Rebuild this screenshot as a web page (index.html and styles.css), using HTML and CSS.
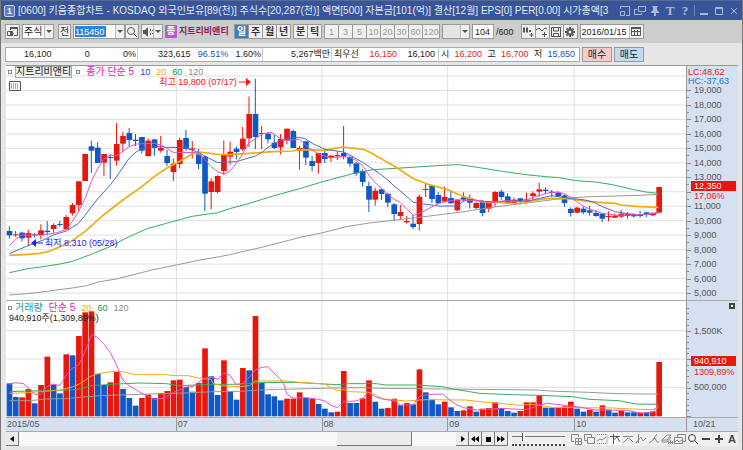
FILE: index.html
```
<!DOCTYPE html>
<html lang="ko">
<head>
    <meta charset="UTF-8">
    <meta name="viewport" content="width=device-width, initial-scale=1.0">
    <title>키움종합차트</title>
    <link rel="stylesheet" href="styles.css">
</head>
<body>
    <div class="window">
        <header class="titlebar">
            <span class="badge">1</span>
            <h1>[0600] 키움종합차트 - KOSDAQ 외국인보유[89(천)] 주식수[20,287(천)] 액면[500] 자본금[101(억)] 결산[12월] EPS[0] PER[0.00] 시가총액[3</h1>
            <div class="title-icons">
                <button aria-label="크기"><svg viewBox="0 0 12 12"><path d="M1.5 4V1.5h9v9H7M1.5 6.5h4v4h-4z"/></svg></button>
                <button aria-label="복사"><svg viewBox="0 0 12 12"><path d="M4.500 1.500h7v5h-7zM3 4.500H.5v5h7V8"/></svg></button>
                <button aria-label="고정"><svg viewBox="0 0 12 12"><path class="fill" d="M3 1h6v1H8v3l2 2v1H2V7l2-2V2H3zM5 8h2v3H5z"/></svg></button>
                <button class="letter">T</button>
                <button class="letter">?</button>
                <span class="bar"></span>
                <button aria-label="최소화"><svg viewBox="0 0 12 12"><path class="thick" d="M2 9h8"/></svg></button>
                <button aria-label="최대화"><svg viewBox="0 0 12 12"><path d="M2.500 2.500h7v7h-7zM2 3.500h8"/></svg></button>
                <button aria-label="닫기"><svg viewBox="0 0 12 12"><path d="M3 3l6 6M9 3L3 9"/></svg></button>
            </div>
        </header>

        <div class="toolbar">
            <button class="tool" aria-label="창"><svg viewBox="0 0 12 12"><path d="M3.500 4V1.500h7v8H7M.5 5.500h5v4h-5z"/><path class="fill" d="M3 1h8v2H3zM3 5l4 2.500L3 10z"/></svg></button>
            <div class="combo">
                <select class="market" aria-label="시장"><option>주식</option></select>
                <span class="arrow"></span>
            </div>
            <button class="tool prev">전</button>
            <div class="combo">
                <div class="code"><input type="text" aria-label="종목코드" value="115450"></div>
                <button class="arrow" aria-label="목록"></button>
            </div>
            <button class="tool search" aria-label="검색"><svg viewBox="0 0 12 12"><circle cx="5" cy="5" r="3.500"/><path d="M7.500 7.500L11 11"/></svg></button>
            <div class="combo sound">
                <button class="tool" aria-label="소리"><svg viewBox="0 0 12 12"><path class="fill" d="M1 4h2l3-3v10L3 8H1z"/><path d="M8.500 3v2M8.500 7v2M10.500 4v1M10.500 7v1"/></svg></button>
                <span class="arrow"></span>
            </div>
            <div class="stock"><b>종</b><span>지트리비앤티</span></div>
            <div class="group days">
                <button class="tool on">일</button>
                <button class="tool">주</button>
                <button class="tool">월</button>
                <button class="tool">년</button>
            </div>
            <div class="group days">
                <button class="tool">분</button>
                <button class="tool">틱</button>
            </div>
            <div class="group">
                <button class="tool" disabled>1</button>
                <button class="tool" disabled>3</button>
                <button class="tool" disabled>5</button>
                <button class="tool" disabled>10</button>
                <button class="tool" disabled>20</button>
                <button class="tool" disabled>30</button>
                <button class="tool" disabled>60</button>
                <button class="tool wide" disabled>120</button>
            </div>
            <div class="combo off">
                <select aria-label="분 간격" disabled><option></option></select>
                <span class="arrow"></span>
            </div>
            <label class="count"><input type="text" value="104" aria-label="봉 개수">/600</label>
            <div class="group">
                <button class="tool" aria-label="봉 추가"><svg viewBox="0 0 12 12"><path class="fill" d="M1 2h2v4H1zM4 2h2v4H4zM7 4h2v2H7z"/><path d="M2 1v6M5 1v6M9.500 7v4M7.500 9h4"/></svg></button>
                <button class="tool" aria-label="지표 추가"><svg viewBox="0 0 12 12"><path d="M0 4l3-2 3 3 3-3 2 1M8.500 6v5M6 8.500h5"/></svg></button>
                <button class="tool" aria-label="저장"><svg viewBox="0 0 12 12"><path d="M1.500 1.500h9v9h-9zM3.500 1v4h5V1M3.500 11V7.500h5V11"/></svg></button>
                <button class="tool" aria-label="설정"><svg viewBox="0 0 12 12"><circle class="thick" cx="6" cy="6" r="2.500"/><path class="thick" d="M6 1v2M6 9v2M1 6h2M9 6h2M2.500 2.500l1 1M8.500 8.500l1 1M9.500 2.500l-1 1M3.500 8.500l-1 1"/></svg></button>
            </div>
            <div class="date">
                <input type="text" value="2016/01/15" aria-label="날짜">
                <button aria-label="달력"><svg viewBox="0 0 12 12"><path d="M1.500 2.500h9v7h-9zM1 5.500h10M4.500 4v6M7.500 4v6"/><path class="fill" d="M1 1h10v2H1z"/></svg></button>
            </div>
        </div>

        <div class="quote">
            <div class="values">
                <div class="cell prices"><span>16,100</span><span>0</span><span>0%</span></div>
                <div class="cell volume-cell"><span>323,615</span><span class="blue">96.51%</span><span>1.60%</span></div>
                <div class="cell amount"><span>5,267백만</span></div>
                <div class="cell best"><span>최우선</span><span class="red">16,150</span><span>16,100</span></div>
                <div class="cell range"><span>시</span><span class="red">16,200</span><span>고</span><span class="red">16,700</span><span>저</span><span class="blue">15,850</span></div>
            </div>
            <button class="buy">매수</button>
            <button class="sell">매도</button>
        </div>

        <main class="chart">
            <section class="pane price-pane">
                <svg class="plot" id="price" viewBox="18 18 2043 702" preserveAspectRatio="none"></svg>
                <div class="legend">
                    <i></i><span class="name">지트리비앤티</span><i></i>
                    <span class="ma5">종가 단순 5</span><span class="ma10">10</span><span class="ma20">20</span><span class="ma60">60</span><span class="ma120">120</span>
                </div>
                <button class="grid-button" aria-label="표"><svg viewBox="0 0 12 12"><path d="M.5 1.500h11v9H.5z"/><path class="dots" d="M2 4h8M2 6h8M2 8h8"/></svg></button>
                <div class="note high">최고 19,800 (07/17)<svg viewBox="0 0 12 8"><path d="M0 4h8"/><path class="fill" d="M7 0l5 4-5 4z"/></svg></div>
                <div class="note low"><svg viewBox="0 0 12 8"><path d="M12 4H4"/><path class="fill" d="M5 0L0 4l5 4z"/></svg>최저 8,310 (05/28)</div>
            </section>
            <svg class="axis" id="price-axis" width="51" height="234"></svg>

            <section class="pane volume-pane">
                <svg class="plot" id="volume" viewBox="18 18 2043 348" preserveAspectRatio="none"></svg>
                <div class="legend">
                    <i></i><span class="teal">거래량</span>
                    <span class="ma5">단순 5</span><span class="ma20">20</span><span class="ma60">60</span><span class="ma120">120</span>
                </div>
                <div class="total">940,910주(1,309,89%)</div>
            </section>
            <svg class="axis" id="volume-axis" width="51" height="116"></svg>

            <div class="dates"><span>2015/05</span><span>07</span><span>08</span><span>09</span><span>10</span></div>
            <div class="last-date">10/21</div>
        </main>

        <footer class="bottom">
            <button class="raised" aria-label="왼쪽"><svg viewBox="0 0 12 12"><path class="fill" d="M8 3v6L4 6z"/></svg></button>
            <div class="track"><div class="thumb"></div></div>
            <button class="raised" aria-label="오른쪽"><svg viewBox="0 0 12 12"><path class="fill" d="M5 3v6l4-3z"/></svg></button>
            <button class="raised" aria-label="뒤로"><svg viewBox="0 0 12 12"><path class="fill" d="M6 3v6L2 6zM10 3v6L6 6z"/></svg></button>
            <button class="raised" aria-label="정지"><svg viewBox="0 0 12 12"><path class="fill" d="M4 4h5v5H4z"/></svg></button>
            <button class="raised" aria-label="앞으로"><svg viewBox="0 0 12 12"><path class="fill" d="M2 3v6l4-3zM6 3v6l4-3z"/></svg></button>
            <div class="speed"><input type="range" min="0" max="10" value="2" aria-label="속도"></div>
            <div class="draw-tools">
                <button aria-label="창 추가"><svg viewBox="0 0 12 12"><path d="M8.500 4V1.500h-7v7H4M5.500 5.500h6v6h-6zM8.500 6v5M6 8.500h5"/></svg></button>
                <button aria-label="창 겹침"><svg viewBox="0 0 12 12"><path d="M4 7.500H1.500v-6h7V4M4.500 4.500h7v6h-7z"/></svg></button>
                <button aria-label="채널"><svg viewBox="0 0 12 12"><path class="dots" d="M1 1.500h10v9H1"/><path d="M1 8l3-2 2 1 4-3"/></svg></button>
                <button class="pressed" aria-label="수직선"><svg viewBox="0 0 12 12"><path d="M1 3.500h10M4.500 1v10M4.500 7L8 4l3 5"/></svg></button>
                <button aria-label="저항선"><svg viewBox="0 0 12 12"><path d="M1 3.500h10M1 10l5-5 3 2 2 2"/></svg></button>
                <button aria-label="추세선"><svg viewBox="0 0 12 12"><path d="M3.500 1v9M1 10l5-6 2 4 3-3"/></svg></button>
                <button aria-label="가격선"><svg viewBox="0 0 12 12"><path d="M1 10l3-2 5-7M5 6l2-1 2 4h2"/></svg></button>
                <button aria-label="지우개"><svg viewBox="0 0 12 12"><path d="M1 7l5-5h4L6 7H1v2h5l4-5M7.500 8v3M9.500 7v4M11.500 8v3M7 9.500h5"/></svg></button>
                <button aria-label="그림"><svg viewBox="0 0 12 12"><path d="M3.500 4V1.500h8v7H9M.5 4.500h8v6h-8zM1 9l2-2 2 2 3-2"/></svg></button>
                <button class="dark" aria-label="확대경"><svg viewBox="0 0 12 12"><circle cx="5" cy="5" r="3.500"/><path d="M7.500 7.500L11 11"/></svg></button>
                <button class="dark" aria-label="축소"><svg viewBox="0 0 12 12"><path class="thick" d="M2 6h8"/></svg></button>
                <button class="dark" aria-label="확대"><svg viewBox="0 0 12 12"><path class="thick" d="M2 6h8M6 2v8"/></svg></button>
                <button class="dark letter">A</button>
            </div>
        </footer>
    </div>
    <script src="chart.js"></script>
</body>
</html>
```

FILE: styles.css
```
* {
    box-sizing: border-box;
}

body {
    margin: 0;
    background-color: #e6e6e6;
    color: #222;
    font-family: "Liberation Sans", "Noto Sans CJK KR", sans-serif;
    font-size: 9px;
    line-height: 12px;
}

button, input, select {
    margin: 0;
    padding: 0;
    border: none;
    border-radius: 0;
    background: none;
    color: inherit;
    font: inherit;
}

button {
    display: flex;
    align-items: center;
    justify-content: center;
}

svg {
    display: block;
    fill: none;
    stroke: currentColor;
}

button svg {
    flex: none;
    width: 12px;
    height: 12px;
}

.fill {
    fill: currentColor;
    stroke: none;
}

.thick {
    stroke-width: 2;
}

.dots {
    stroke-dasharray: 1 1;
}

.window {
    display: flex;
    flex-direction: column;
    min-height: 100vh;
    border: 1px solid #777;
    border-top-color: #5a6a90;
    border-bottom-width: 2px;
}

/* title bar */
.titlebar {
    display: flex;
    align-items: center;
    height: 19px;
    padding: 0 2px 0 3px;
    background-color: #38549a;
    color: #e4eaf6;
}

.badge {
    width: 11px;
    height: 12px;
    border: 1px solid #c4d0ea;
    border-radius: 2px;
    background-color: #5f7dbd;
    font-weight: bold;
    line-height: 10px;
    text-align: center;
}

.titlebar h1 {
    flex: 1;
    min-width: 0;
    margin: 0 0 0 3px;
    overflow: hidden;
    font-size: 10px;
    font-weight: normal;
    white-space: nowrap;
}

.title-icons {
    display: flex;
    align-items: center;
    gap: 3px;
    color: #a9b7da;
}

.letter {
    width: 12px;
    font-family: "Liberation Serif", serif;
    font-size: 13px;
    font-weight: bold;
}

.bar {
    width: 1px;
    height: 11px;
    background-color: #6f86bb;
}

/* toolbar */
.toolbar {
    display: flex;
    align-items: center;
    height: 23px;
    gap: 2px;
    padding: 0 4px;
    background-color: #cdcdcd;
}

.tool {
    width: 15px;
    height: 15px;
    border: 1px solid #999;
    background-color: #f0f0f0;
    color: #333;
}

.tool svg {
    color: #555;
}

.combo {
    display: flex;
    height: 15px;
    border: 1px solid #999;
    background-color: #fff;
}

.combo select {
    width: 21px;
    padding-left: 1px;
    appearance: none;
}

.market, .prev, .days {
    font-size: 10px;
}

.arrow {
    display: flex;
    align-items: center;
    justify-content: center;
    width: 9px;
    border-left: 1px solid #bbb;
    background-color: #f0f0f0;
}

.arrow::after {
    content: "";
    border: 3px solid transparent;
    border-top-color: #555;
    border-bottom: none;
}

.prev {
    width: 13px;
    margin-left: 2px;
}

.code {
    width: 41px;
    padding: 1px 0 1px 1px;
}

.code input {
    display: block;
    width: 31px;
    height: 11px;
    background-color: #2f86d8;
    color: #fff;
}

.search {
    width: 14px;
    margin-left: -2px;
}

.sound .tool {
    width: 11px;
    height: 13px;
    border: none;
}

.stock {
    display: flex;
    width: 67px;
    height: 13px;
    overflow: hidden;
    color: #8a1f55;
    font-weight: bold;
    white-space: nowrap;
}

.stock b {
    width: 12px;
    margin-right: 2px;
    background-color: #b45ed0;
    color: #fff;
    text-align: center;
}

.group {
    display: flex;
    margin-right: 1px;
}

.group .tool {
    margin-right: -1px;
}

.days .tool {
    font-weight: bold;
}

.group .on {
    background-color: #3f7cc4;
    color: #fff;
}

.group .tool:disabled {
    color: #999;
}

.group .wide {
    width: 18px;
}

.off {
    background-color: #e4e4e4;
}

.off select {
    width: 17px;
}

.count {
    display: flex;
    align-items: center;
    gap: 2px;
    margin-right: 5px;
}

.count input {
    width: 22px;
    height: 15px;
    padding-right: 3px;
    border: 1px solid #999;
    background-color: #fff;
    text-align: right;
}

.date {
    display: flex;
    height: 15px;
    border: 1px solid #999;
    background-color: #fff;
}

.date input {
    width: 48px;
    padding-left: 1px;
}

.date button {
    width: 14px;
    border-left: 1px solid #bbb;
    background-color: #f0f0f0;
    color: #555;
}

/* quote line */
.quote {
    display: flex;
    align-items: center;
    height: 22px;
    gap: 2px;
    padding: 1px 4px 0;
}

.values {
    display: flex;
    height: 15px;
    border: 1px solid #aaa;
    background-color: #fff;
    line-height: 13px;
    white-space: nowrap;
}

.cell {
    display: flex;
    justify-content: space-between;
    border-right: 1px solid #ccc;
}

.cell:last-child {
    border-right: none;
}

.prices {
    width: 132px;
    padding: 0 1px 0 18px;
}

.volume-cell {
    width: 125px;
    padding: 0 1px 0 20px;
}

.amount {
    width: 69px;
    padding-right: 1px;
    justify-content: flex-end;
}

.best {
    width: 107px;
    padding: 0 3px 0 2px;
}

.range {
    width: 140px;
    padding: 0 4px 0 2px;
}

.red {
    color: #e8201a;
}

.blue {
    color: #2250c8;
}

.buy, .sell {
    width: 30px;
    height: 15px;
    border: 1px solid #999;
    background-color: #f6cccc;
    font-size: 10px;
}

.sell {
    background-color: #c3daf3;
}

/* chart */
.chart {
    display: grid;
    grid-template-columns: 1fr 51px;
    grid-template-rows: 235px 117px 14px;
    margin: 0 4px 0 5px;
    border-top: 1px solid #999;
    background-color: #fff;
}

.pane {
    position: relative;
    min-width: 0;
    border-bottom: 1px solid #aaa;
    border-right: 1px solid #999;
    overflow: hidden;
}

.plot {
    width: 100%;
    height: 100%;
}

.axis {
    width: 51px;
    height: 100%;
    border-bottom: 1px solid #aaa;
    background-color: #d5e1f0;
}

.axis text {
    fill: #555;
    stroke: none;
}

.axis .red {
    fill: #e8201a;
}

.axis .hc {
    fill: #2a6fd0;
}

.axis .tag {
    fill: #e8170c;
    stroke: none;
}

.axis .tag-text {
    fill: #fff;
}

.axis line {
    stroke: #888;
}

.grid-line {
    stroke: #e0e0e0;
    stroke-width: 3;
}

.up {
    fill: #e8170c;
    stroke: #e8170c;
}

.down {
    fill: #0f58c8;
    stroke: #0f58c8;
}

.wick {
    stroke-width: 3;
}

.body {
    stroke: none;
}

.line {
    stroke-width: 3;
}

.line.ma5 { stroke: #e850cc; }
.line.ma10 { stroke: #4f68c8; }
.line.ma20 { stroke: #f0ac10; }
.line.ma60 { stroke: #38ac5c; }
.line.ma120 { stroke: #999; }

#price .line.ma20 {
    stroke-width: 5;
}

.legend {
    position: absolute;
    top: 0;
    left: 2px;
    display: flex;
    align-items: center;
    gap: 6px;
    height: 12px;
    white-space: nowrap;
}

.volume-pane .legend {
    top: 1px;
}

.legend i {
    width: 4px;
    height: 4px;
    border: 1px solid #888;
}

.legend i:first-child {
    margin-right: -3px;
}

.legend .name {
    border: 1px solid #aaa;
    background-color: #f0f0f0;
    line-height: 10px;
}

.legend .name, .legend .ma5, .legend .teal {
    font-size: 10px;
}

.legend .name + i {
    margin-left: -2px;
}

.legend .ma5 { color: #e020c0; }
.legend .ma10 { color: #2040c0; }
.legend .ma20 { color: #f0ac10; }
.legend .ma60 { color: #109838; }
.legend .ma120 { color: #888; }
.legend .teal { color: #2a98a0; }

.grid-button {
    position: absolute;
    top: 14px;
    left: 3px;
    color: #555;
}

.note {
    position: absolute;
    display: flex;
    align-items: center;
    gap: 2px;
    white-space: nowrap;
}

.note svg {
    width: 12px;
    height: 8px;
}

.high {
    top: 10px;
    right: 64%;
    color: #ff1010;
}

.low {
    top: 171px;
    left: 25px;
    color: #2020ff;
}

.total {
    position: absolute;
    top: 11px;
    left: 3px;
}

.dates, .last-date {
    border-bottom: 1px solid #aaa;
    background-color: #d5e1f0;
    color: #555;
    line-height: 13px;
}

.dates {
    display: grid;
    grid-template-columns: 170fr 146fr 126fr 127fr 112fr;
    border-right: 1px solid #999;
}

.dates span {
    padding-left: 1px;
}

.dates span + span {
    border-left: 1px solid #999;
}

.last-date {
    padding-left: 6px;
}

/* scroll bar and drawing tools */
.bottom {
    display: flex;
    height: 14px;
    margin: 0 4px 4px 5px;
    background-color: #f0f0f0;
}

.raised {
    width: 13px;
    height: 14px;
    border-right: 1px solid #777;
    border-bottom: 1px solid #777;
    background-color: #ececec;
    color: #000;
}

.track {
    flex: 1;
    display: flex;
    padding-right: 44px;
    justify-content: flex-end;
    background-color: #f8f8f8;
}

.thumb {
    width: 75px;
    border-right: 1px solid #777;
    border-bottom: 1px solid #777;
    background-color: #ececec;
}

.speed {
    width: 53px;
    margin: 0 5px 0 4px;
    border-bottom: 2px dotted #444;
}

.speed input {
    display: block;
    width: 100%;
    height: 10px;
    appearance: none;
    background: linear-gradient(#777, #777) 0 4px / 100% 1px no-repeat;
}

.speed input::-webkit-slider-thumb {
    appearance: none;
    width: 3px;
    height: 8px;
    border-left: 1px solid #555;
    background-color: #f0f0f0;
}

.draw-tools {
    display: flex;
    align-items: center;
    gap: 1px;
    color: #888;
}

.draw-tools .pressed {
    background-color: #fff;
    color: #555;
}

.draw-tools .dark {
    color: #444;
}

.draw-tools .letter {
    font-family: "Liberation Sans", sans-serif;
    font-size: 11px;
}
```

FILE: chart.js
```
// chart units: 3 per pixel
const START = 28;
const STEP = 18.95;

// [colour, high, body top, body bottom, low]
const candles = [
    ["d",499,513,526,536],["u",513,523,526,531],["d",515,518,535,544],["u",509,519,533,558],["d",519,523,526,533],
    ["u",493,511,525,538],["d",483,512,516,526],["u",490,495,507,518],["d",483,492,495,500],["u",465,471,508,510],
    ["u",429,435,460,467],["u",364,364,435,454],["u",282,282,363,363],["d",242,259,272,339],["d",247,263,309,309],
    ["u",282,282,308,348],["d",282,291,294,357],["u",189,252,302,317],["u",216,228,251,275],["d",204,219,240,258],
    ["d",222,239,243,258],["d",231,231,272,280],["u",235,242,288,290],["d",238,238,264,287],["u",228,263,272,278],
    ["d",270,288,309,318],["u",296,311,336,363],["u",234,240,312,325],["d",210,234,267,272],["u",243,265,269,296],
    ["d",267,283,312,328],["d",287,290,401,453],["u",355,364,396,448],["u",346,348,396,400],["u",242,283,333,344],
    ["u",245,275,290,314],["d",259,266,276,298],["u",201,236,268,274],["u",109,162,235,261],["d",56,162,231,268],
    ["u",197,219,222,267],["d",216,221,238,250],["d",223,248,264,268],["u",222,237,262,283],["u",206,206,242,253],
    ["d",209,213,264,264],["u",258,264,273,329],["d",244,244,293,315],["d",288,303,318,334],["u",279,279,309,341],
    ["d",272,279,297,309],["u",285,287,294,306],["u",274,285,289,300],["d",198,279,289,298],["d",287,291,311,320],
    ["d",306,310,340,347],["d",328,333,366,380],["d",365,378,419,456],["u",383,392,419,437],["d",386,388,402,420],
    ["d",399,401,428,441],["d",429,433,462,483],["u",435,456,468,480],["u",468,483,487,491],["d",465,491,501,507],
    ["u",404,410,492,512],["u",371,387,390,411],["d",375,376,417,429],["d",396,405,430,432],["u",380,411,424,428],
    ["d",391,414,430,431],["u",418,419,451,454],["d",397,412,419,425],["d",404,414,428,446],["u",424,429,444,449],
    ["d",420,425,459,469],["u",423,427,446,457],["u",393,396,429,440],["d",389,395,411,419],["d",400,409,429,432],
    ["u",412,419,429,431],["d",414,415,424,433],["u",398,418,422,431],["u",394,400,408,420],["u",368,388,395,410],
    ["d",382,389,393,403],["d",390,395,399,411],["d",394,398,408,411],["d",404,406,429,441],["d",442,447,459,470],
    ["u",440,443,458,460],["d",439,446,457,462],["d",438,451,458,467],["d",450,459,468,470],["d",459,461,476,486],
    ["u",454,468,471,484],["u",460,467,473,474],["u",450,461,470,474],["u",456,462,468,476],["d",460,462,469,473],
    ["d",453,465,468,473],["d",456,457,464,471],["u",457,459,466,469],["u",381,381,458,458]
];

// colour and top of each volume bar
const volumes = ("d265 d306 u307 u282 d325 u270 u185 d269 d295 u178 d181 u123 u52 u49 d236 d270 u262 u231 d282 d309 " +
    "d332 u309 u299 d309 u294 u288 u256 u254 d276 d290 u264 u160 d244 d300 u196 d289 d314 u219 d226 u63 " +
    "d264 d298 d304 d316 u311 u311 u292 d309 u311 d327 d341 d352 u350 u228 d324 d324 u310 u256 d320 d341 " +
    "u339 u311 d331 u324 d328 u223 d292 d314 d328 u320 d337 d348 u346 u334 d350 u341 u339 u322 d339 d348 " +
    "d353 u348 u322 u322 u301 d338 d338 u338 u334 u320 d341 d350 u344 d350 u331 d344 d353 u347 d352 d352 " +
    "u353 d353 u349 u201").split(" ");

const priceLines = {
    ma120: "28,705 84,701 140,694 217,684 260,677 300,665 350,657 460,629 530,615 600,600 660,590 690,584 790,561 910,530 970,518 1040,500 1110,489 1190,480 1250,473 1330,463 1380,457 1440,448 1488,441 1540,434 1630,423 1700,414 1780,410 1850,408 1920,406 1978,403",
    ma60: "28,638 84,626 130,620 180,612 217,604 274,583 330,560 388,530 445,505 500,490 577,469 654,458 690,446 750,430 820,408 900,386 970,365 1060,341 1120,329 1190,325 1250,321 1330,316 1380,314 1440,323 1510,334 1580,344 1640,350 1680,353 1730,362 1790,366 1840,374 1900,388 1940,396 1978,400",
    ma20: "28,586 84,583 120,580 150,573 180,560 220,540 256,514 311,465 369,420 426,380 463,350 500,325 540,304 577,282 600,276 654,283 690,284 750,280 820,275 880,273 900,269 980,271 1000,266 1030,261 1090,268 1110,276 1140,293 1190,322 1242,356 1290,374 1340,387 1380,404 1412,416 1449,426 1488,427 1563,431 1600,422 1640,416 1697,415 1733,420 1772,425 1810,428 1848,430 1867,435 1910,439 1978,442",
    ma10: "28,581 84,557 130,540 160,525 199,513 217,502 236,490 256,465 293,417 331,375 350,350 388,295 410,275 430,265 484,258 500,262 555,263 596,277 615,288 654,308 690,306 710,305 767,288 787,277 805,262 824,250 845,240 880,233 900,232 918,237 940,251 976,268 1033,276 1051,285 1090,307 1110,321 1140,340 1165,360 1184,378 1202,392 1242,427 1260,430 1318,438 1373,438 1392,424 1412,418 1449,424 1488,426 1525,422 1582,424 1621,415 1658,407 1697,413 1752,419 1780,425 1810,440 1848,455 1885,461 1924,465 1961,461 1978,459",
    ma5: "28,557 47,538 65,525 130,525 170,518 200,508 217,485 236,455 256,415 274,365 293,327 311,298 331,285 350,287 369,275 388,260 410,252 463,250 484,255 520,277 590,278 610,292 634,320 654,335 672,342 690,335 710,310 730,280 748,248 767,237 787,222 810,217 824,222 842,236 862,241 900,238 930,266 957,282 990,293 1033,290 1051,292 1069,300 1090,318 1108,345 1127,368 1165,402 1184,418 1202,427 1222,447 1242,466 1260,460 1318,430 1336,425 1373,420 1449,422 1468,430 1488,426 1525,422 1563,425 1582,420 1600,413 1640,400 1676,396 1697,402 1715,412 1733,425 1752,438 1772,448 1810,460 1850,466 1924,464 1961,461 1978,455"
};

const volumeLines = {
    ma120: "28,317 90,317 140,312 200,311 250,306 300,302 390,299 530,295 640,290 720,289 780,285 840,283 930,281 1000,279 1090,278 1140,280 1330,282 1440,283 1610,285 1670,289 1770,292 1830,295 1920,297 1978,297",
    ma60: "28,290 84,288 140,287 210,285 240,282 274,272 350,267 420,264 500,266 540,272 634,268 690,268 720,267 780,263 880,262 940,265 1010,269 1050,266 1130,266 1160,270 1250,270 1330,275 1360,282 1410,290 1440,295 1540,299 1620,301 1720,305 1770,313 1860,317 1910,327 1978,328",
    ma20: "28,295 84,293 122,290 180,285 217,276 236,268 256,256 274,243 300,235 350,228 380,232 404,239 500,239 520,242 565,242 596,249 634,253 640,265 665,272 720,275 750,272 766,258 862,258 900,262 976,267 994,278 1014,287 1033,284 1050,290 1109,292 1130,300 1150,312 1220,318 1280,314 1400,315 1440,320 1500,325 1563,331 1601,328 1639,334 1660,337 1840,339 1900,342 1961,344 1978,338",
    ma5: "28,268 47,263 70,266 84,277 104,298 122,298 141,275 160,267 180,272 199,240 217,220 236,210 256,170 276,118 293,128 311,146 331,172 350,210 369,255 388,272 426,295 463,313 484,311 502,305 520,293 559,276 580,275 596,262 615,250 634,247 654,253 672,234 690,240 711,270 729,265 748,248 766,225 787,217 805,215 824,235 842,252 852,265 862,298 881,309 920,308 957,313 976,318 994,331 1014,338 1033,320 1069,318 1090,311 1105,292 1127,305 1145,311 1184,318 1203,330 1241,330 1255,310 1265,302 1297,298 1330,297 1355,318 1373,330 1393,338 1431,345 1506,340 1580,344 1600,338 1621,330 1645,325 1733,335 1790,345 1885,346 1924,354 1961,352 1978,330"
};

const months = [530, 967, 1345, 1725];

function gridLines(levels, height) {
    let out = "";
    levels.forEach(y => out += `<path class="grid-line" d="M18 ${y}H2061"/>`);
    months.forEach(x => out += `<path class="grid-line" d="M${x} 0V${height}"/>`);
    return out;
}

function maLines(lines) {
    return Object.keys(lines).map(name => `<polyline class="line ${name}" points="${lines[name]}"/>`).join("");
}

function side(letter) {
    return letter === "u" ? "up" : "down";
}

function drawPrice() {
    const levels = [];
    for (let i = 0; i <= 15; i++) {
        levels.push(48 + i * 43.4);
    }
    let bars = "";
    candles.forEach(([type, high, top, bottom, low], i) => {
        const x = START + i * STEP;
        bars += `<g class="${side(type)}"><path class="wick" d="M${x} ${high}V${low}"/>` +
            `<rect class="body" x="${x - 8}" y="${top}" width="17" height="${bottom - top}"/></g>`;
    });
    document.getElementById("price").innerHTML = gridLines(levels, 720) + bars + maLines(priceLines);
}

function drawVolume() {
    let bars = "";
    volumes.forEach((item, i) => {
        const top = Number(item.slice(1));
        bars += `<g class="${side(item[0])}"><rect class="body" x="${START + i * STEP - 8}" y="${top}" width="17" height="${364 - top}"/></g>`;
    });
    document.getElementById("volume").innerHTML = gridLines([107, 192, 277], 366) + bars + maLines(volumeLines);
}

function drawPriceAxis() {
    let out = `<text class="red" x="1" y="9">LC:48,62</text><text class="hc" x="1" y="18">HC:-37,63</text>`;
    for (let i = 0; i < 15; i++) {
        const y = Math.round(24.3 + i * 14.48);
        out += `<line x1="0" x2="4" y1="${y + .5}" y2="${y + .5}"/><line x1="0" x2="2" y1="${y + 7.5}" y2="${y + 7.5}"/>`;
        if (i !== 7) {
            out += `<text x="7" y="${y + 3}">${(19 - i)},000</text>`;
        }
    }
    out += `<text class="red" x="7" y="133">17,06%</text>`;
    out += `<rect class="tag" x="4" y="115" width="45" height="10"/><text class="tag-text" x="7" y="123">12,350</text>`;
    document.getElementById("price-axis").innerHTML = out;
}

function drawVolumeAxis() {
    let out = "";
    for (let i = 0; i < 20; i++) {
        const y = Math.round(115 - i * 5.7) + .5;
        out += `<line x1="0" x2="${i % 5 ? 2 : 4}" y1="${y}" y2="${y}"/>`;
    }
    out += `<text x="7" y="33">1,500K</text><text x="7" y="61">1,000K</text><text x="7" y="89">500,000</text>`;
    out += `<text class="red" x="7" y="74">1309,89%</text>`;
    out += `<rect class="tag" x="4" y="55" width="45" height="10"/><text class="tag-text" x="7" y="63">940,910</text>`;
    out += `<rect x="43" y="3" width="4" height="4" fill="#fff" stroke="#444" stroke-width="2"/>`;
    document.getElementById("volume-axis").innerHTML = out;
}

drawPrice();
drawVolume();
drawPriceAxis();
drawVolumeAxis();
```
